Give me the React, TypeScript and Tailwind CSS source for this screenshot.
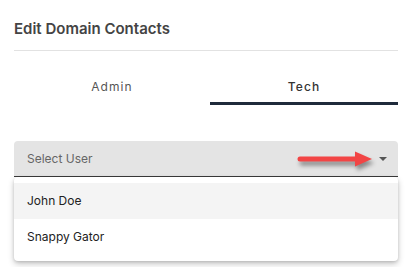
import React from "react";

const users = ["John Doe", "Snappy Gator"];

function Tabs() {
  return (
    <div className="mt-[20px] flex">
      <button className="flex h-[34px] w-[196px] items-center justify-center border-b-[3px] border-transparent text-[12px] tracking-[0.09em] text-[#555]">
        Admin
      </button>
      <button className="flex h-[34px] flex-1 items-center justify-center border-b-[3px] border-[#1f2a3b] text-[12px] font-medium tracking-[0.09em] text-[#333]">
        Tech
      </button>
    </div>
  );
}

// red annotation arrow pointing at the caret
function Arrow() {
  return (
    <svg
      className="pointer-events-none absolute left-[270px] top-[7px]"
      width="92"
      height="24"
      viewBox="0 0 92 24"
      style={{ filter: "drop-shadow(2px 4px 2px rgba(0,0,0,0.4))" }}
    >
      <line x1="16" y1="11" x2="74" y2="11" stroke="#f24545" strokeWidth="5" strokeLinecap="round" />
      <path d="M71 3.5 L88 11 L71 18.5 Z" fill="#f24545" />
    </svg>
  );
}

export default function App() {
  return (
    <div className="min-h-[267px] w-[414px] bg-white pl-[14px] pr-[16px] font-['Inter',sans-serif]">
      <div className="border-b border-[#e2e2e2] pb-[11px] pt-[19px]">
        <h2 className="text-[15px] leading-[20px] font-semibold text-[#444]">Edit Domain Contacts</h2>
      </div>

      <Tabs />

      <div className="relative mt-[36px]">
        <div className="relative flex h-[36px] items-center rounded-t-[4px] border-b border-[#3a3a3a] bg-[#e4e4e4] pl-[13px] pr-[11px]">
          <span className="text-[12px] text-[#666]">Select User</span>
          <span className="ml-auto h-0 w-0 border-x-[4px] border-t-[4px] border-x-transparent border-t-[#555]" />
          <Arrow />
        </div>

        <ul className="absolute left-0 right-0 top-full rounded-[4px] bg-white py-[6px] shadow-[0_3px_6px_rgba(0,0,0,0.22),0_1px_3px_rgba(0,0,0,0.12)]">
          {users.map((u, i) => (
            <li
              key={u}
              className={`flex h-[36px] items-center pl-[13px] text-[12px] text-[#222] ${i === 0 ? "bg-[#f4f4f4]" : ""}`}
            >
              {u}
            </li>
          ))}
        </ul>
      </div>
    </div>
  );
}
